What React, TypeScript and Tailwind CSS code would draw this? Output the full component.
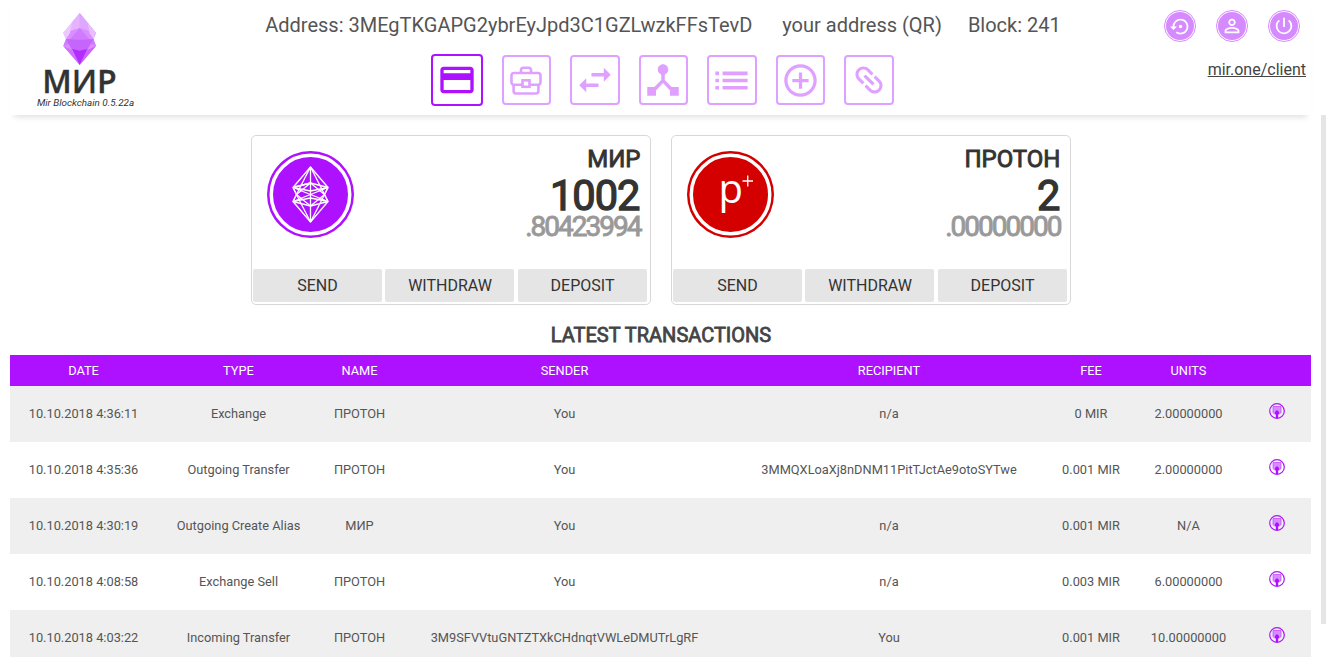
import React from 'react';
import {
  MdPayment,
  MdSwapHoriz,
  MdDeviceHub,
  MdList,
  MdAddCircleOutline,
  MdLink,
  MdSettingsBackupRestore,
  MdPersonOutline,
  MdPowerSettingsNew,
} from 'react-icons/md';

function Logo() {
  return (
    <svg width="34" height="53" viewBox="0 0 34 53">
      <path d="M16.7 0L33 20L30.5 26L33 33L16.7 52L0.3 33L3 26L0.3 20Z" fill="#d98fff" />
      <path d="M16.7 0L33 20L16.7 15Z" fill="#dfa6ff" />
      <path d="M16.7 0L0.3 20L16.7 15Z" fill="#e6b4ff" />
      <path d="M0.3 20L9 9.5L7 20L3 26Z" fill="#edc9ff" />
      <path d="M33 20L24.500 9.500L26.500 20L30.500 26Z" fill="#e9bdff" />
      <path d="M16.7 15L28 28L16.7 37L5.500 28Z" fill="#cf7aff" />
      <path d="M3 26L9 30L0.3 33Z" fill="#d07dff" />
      <path d="M30.500 26L24 30L33 33Z" fill="#d07dff" />
      <path d="M3 26L16.700 27L30.500 26L24 37L9 37Z" fill="#c565fb" />
      <path d="M0.300 33L9 37L16.700 52Z" fill="#cf70ff" />
      <path d="M33 33L24.500 37L16.700 52Z" fill="#ca64ff" />
      <path d="M9 36L16.700 37.500L24.500 36L16.700 52Z" fill="#b32dff" />
    </svg>
  );
}

function Briefcase() {
  return (
    <svg width="32" height="29" viewBox="0 0 32 29" fill="none" stroke="currentColor" strokeWidth="2.6">
      <path d="M11 7V4.300Q11 1.700 13.500 1.700H18.500Q21 1.700 21 4.300V7" />
      <path d="M12.500 18.700H4Q1.500 18.700 1.500 16.200V9.500Q1.500 7 4 7H28Q30.500 7 30.500 9.500V16.200Q30.500 18.700 28 18.700H20" />
      <path d="M3.600 19V25Q3.600 27.500 6 27.500H26Q28.400 27.500 28.400 25V19" />
      <rect x="12.500" y="14.300" width="7" height="6.500" />
    </svg>
  );
}

function MirCoin() {
  return (
    <svg width="87" height="87" viewBox="-43.5 -43.5 87 87">
      <circle r="43.5" fill="#ae11ff" />
      <circle r="39.250" fill="none" stroke="#fff" strokeWidth="3.500" />
      <g fill="none" stroke="#fff" strokeWidth="1.300" strokeLinejoin="round">
        <path d="M0 -27.500L17.500 -7M0 -27.500L-17.500 -7M0 27.500L17.500 7M0 27.500L-17.500 7M0 -27.500V27.500" />
        <path d="M0 -27.500L-9.500 -9L-17.500 7L0 11.500L17.500 7L9.500 -9Z" />
        <path d="M0 27.500L-9.500 9L-17.500 -7L0 -11.500L17.500 -7L9.500 9Z" />
        <path d="M-17.500 -7L0 -3.500L17.500 -7M-17.500 7L0 3.500L17.500 7M-17.500 -7L17.500 7M-17.500 7L17.500 -7" />
        <path d="M-17.500 -7L0 -11.500L14 0L0 11.500L-14 0L0 -11.500M-17.500 -7L-14 0L-17.500 7M17.500 -7L14 0L17.500 7" />
      </g>
    </svg>
  );
}

function ProtonCoin() {
  return (
    <svg width="87" height="87" viewBox="-43.5 -43.5 87 87">
      <circle r="43.5" fill="#d40000" />
      <circle r="39.250" fill="none" stroke="#fff" strokeWidth="3.500" />
      <text x="-12" y="8.500" fontSize="40" fill="#fff" className="font-['Open_Sans',sans-serif]">p</text>
      <path d="M12 -13.500H22.500M17.250 -19V-8" stroke="#fff" strokeWidth="1.300" />
    </svg>
  );
}

function BlockIcon() {
  return (
    <svg width="16" height="16" viewBox="0 0 16 16">
      <circle cx="8" cy="8" r="7.300" fill="none" stroke="#ae11ff" strokeWidth="1.200" />
      <path d="M4 3.500L8 3L12 3.500V9.500L10 11.500H6L4 9.500Z" fill="#d78cff" />
      <path d="M4 3.500H12M4 3.500V9.500L6 11.500M12 3.500V9.500L10 11.500" stroke="#bd4cf5" strokeWidth="0.700" fill="none" />
      <path d="M8 7L10 9V11H9.200V15H6.800V11H6V9Z" fill="#ae11ff" />
    </svg>
  );
}

function NavBox({ children }: { children: React.ReactNode }) {
  return (
    <div className="flex h-[50px] w-[49.5px] items-center justify-center rounded border-2 border-[#dfa0ff] text-[#dfa0ff]">
      {children}
    </div>
  );
}

function RoundButton({ children }: { children: React.ReactNode }) {
  return (
    <div className="flex size-8 items-center justify-center rounded-full border border-[#d68aff] p-px">
      <div className="flex size-7 items-center justify-center rounded-full bg-[#d68aff] text-white">{children}</div>
    </div>
  );
}

type CardProps = { icon: React.ReactNode; name: string; whole: string; fraction: string };

function AssetCard({ icon, name, whole, fraction }: CardProps) {
  return (
    <section className="flex h-[170px] w-[400px] flex-col justify-between rounded-[5px] border border-[#d8d8d8] p-px pb-[2px]">
      <div className="flex justify-between pt-[14px] pr-[9px] pl-[14px]">
        {icon}
        <div className="-mt-[6px] flex flex-col items-end text-[#333]">
          <h2 className="-mr-px text-2xl leading-[29px] [-webkit-text-stroke:0.9px]">{name}</h2>
          <p className="text-[41.6px] leading-[44px] tracking-[-1px] [-webkit-text-stroke:1.3px]">{whole}</p>
          <p className="-mr-px -mt-[3px] text-[28px] leading-[24px] tracking-[-2px] text-[#999] [-webkit-text-stroke:0.9px]">{fraction}</p>
        </div>
      </div>
      <div className="flex gap-[3.500px] pr-px">
        {['SEND', 'WITHDRAW', 'DEPOSIT'].map((label) => (
          <button key={label} className="h-[33px] w-[129px] rounded-[2px] bg-[#e5e5e5] pl-px text-base text-[#333]">
            {label}
          </button>
        ))}
      </div>
    </section>
  );
}

const rows = [
  ['10.10.2018 4:36:11', 'Exchange', 'ПРОТОН', 'You', 'n/a', '0 MIR', '2.00000000'],
  ['10.10.2018 4:35:36', 'Outgoing Transfer', 'ПРОТОН', 'You', '3MMQXLoaXj8nDNM11PitTJctAe9otoSYTwe', '0.001 MIR', '2.00000000'],
  ['10.10.2018 4:30:19', 'Outgoing Create Alias', 'МИР', 'You', 'n/a', '0.001 MIR', 'N/A'],
  ['10.10.2018 4:08:58', 'Exchange Sell', 'ПРОТОН', 'You', 'n/a', '0.003 MIR', '6.00000000'],
  ['10.10.2018 4:03:22', 'Incoming Transfer', 'ПРОТОН', '3M9SFVVtuGNTZTXkCHdnqtVWLeDMUTrLgRF', 'You', '0.001 MIR', '10.00000000'],
];

const columns = 'grid grid-cols-[147px_163px_79px_331px_318px_86px_109px_68px] items-center text-center text-[12.8px]';

export default function App() {
  return (
    <div className="flex h-[657px] w-[1326px] flex-col overflow-hidden bg-white font-[Roboto,sans-serif] text-[#555]">
      <header className="mx-[10px] grid h-[115px] w-[1301px] shrink-0 grid-cols-[151px_1fr_151px] shadow-[0_6px_6px_-4px_rgba(0,0,0,0.13)]">
        <div className="flex w-[151px] flex-col items-center pt-[13px]">
          <div className="-ml-[11px] flex flex-col items-center">
            <Logo />
            <div className="-ml-px -mt-px font-['Open_Sans',sans-serif] text-[32px] leading-[32px] font-semibold text-[#333] [-webkit-text-stroke:0.3px]">МИР</div>
          </div>
          <div className="text-[9.9px] leading-[12px] text-[#333] italic">Mir Blockchain 0.5.22a</div>
        </div>
        <div className="flex flex-col items-center pt-[10px] pl-[5px]">
          <div className="flex text-xl leading-[30px] whitespace-nowrap">
            <span>Address: 3MEgTKGAPG2ybrEyJpd3C1GZLwzkFFsTevD</span>
            <span className="ml-[30px]">your address (QR)</span>
            <span className="ml-[26px]">Block: 241</span>
          </div>
          <nav className="mt-[14px] mr-[2px] flex items-center gap-[19px]">
            <div className="flex size-[52px] items-center justify-center rounded border-2 border-[#ae11ff] text-[#ae11ff]">
              <MdPayment size={40} />
            </div>
            <NavBox><Briefcase /></NavBox>
            <NavBox><MdSwapHoriz size={42} /></NavBox>
            <NavBox><MdDeviceHub size={42} /></NavBox>
            <NavBox><MdList size={43} /></NavBox>
            <NavBox><MdAddCircleOutline size={39} /></NavBox>
            <NavBox><MdLink size={38} className="rotate-45" /></NavBox>
          </nav>
        </div>
        <div className="flex flex-col items-end pt-[10px]">
          <div className="flex gap-5 pr-[11px]">
            <RoundButton><MdSettingsBackupRestore size={21} /></RoundButton>
            <RoundButton><MdPersonOutline size={22} /></RoundButton>
            <RoundButton><MdPowerSettingsNew size={22} /></RoundButton>
          </div>
          <a className="mt-[16px] pr-[5px] text-base leading-[24px] text-[#444] underline">mir.one/client</a>
        </div>
      </header>

      <div className="flex min-h-0 flex-1 justify-between">
        <main className="ml-[10px] flex w-[1301px] flex-col items-center">
          <div className="mt-[20px] flex gap-[20px]">
            <AssetCard icon={<MirCoin />} name="МИР" whole="1002" fraction=".80423994" />
            <AssetCard icon={<ProtonCoin />} name="ПРОТОН" whole="2" fraction=".00000000" />
          </div>
          <h1 className="mt-[15px] ml-px h-[35px] shrink-0 text-xl leading-[30px] text-[#444] [-webkit-text-stroke:0.8px]">LATEST TRANSACTIONS</h1>
          <div className="w-full">
            <div className={columns + ' h-[31px] bg-[#ae11ff] text-white'}>
              {['DATE', 'TYPE', 'NAME', 'SENDER', 'RECIPIENT', 'FEE', 'UNITS', ''].map((title) => (
                <div key={title}>{title}</div>
              ))}
            </div>
            {rows.map((row) => (
              <div key={row[0]} className={columns + ' h-14 odd:bg-white even:bg-[#efefef]'}>
                {row.map((cell, i) => (
                  <div key={i}>{cell}</div>
                ))}
                <div className="flex justify-center pb-[6px]"><BlockIcon /></div>
              </div>
            ))}
          </div>
        </main>
        <div className="h-[509px] w-[5px] bg-[#e5e5e5]" />
      </div>
    </div>
  );
}
